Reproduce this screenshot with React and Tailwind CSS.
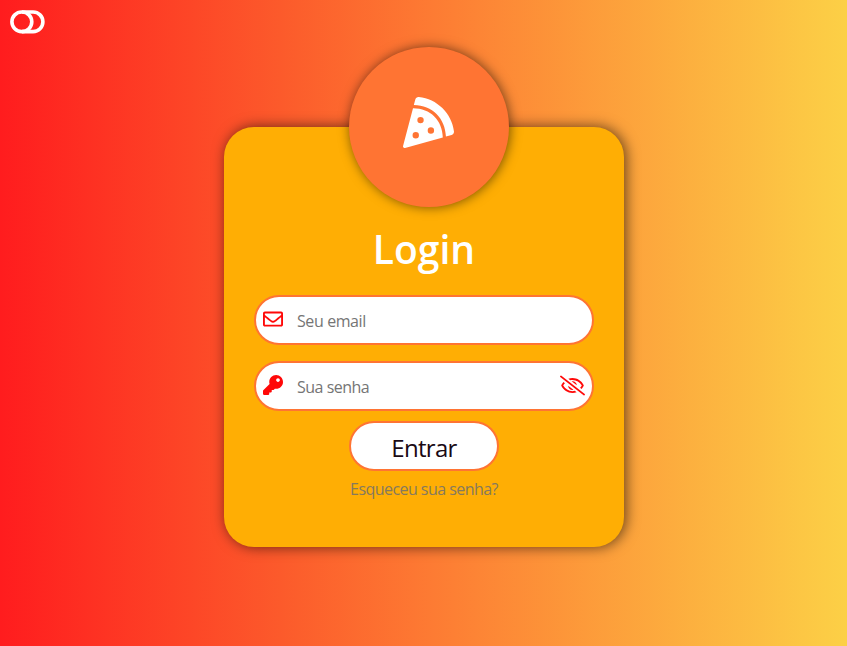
import { FaPizzaSlice, FaRegEnvelope, FaKey, FaRegEyeSlash } from "react-icons/fa";

function ToggleIcon() {
  return (
    <svg width="35" height="24" viewBox="0 0 35 24" fill="none" stroke="currentColor" strokeWidth="3.6" className="text-white">
      <rect x="1.9" y="2" width="31" height="19.6" rx="9.8" />
      <path d="M12 2a9.8 9.8 0 0 1 0 19.6" />
    </svg>
  );
}

export default function App() {
  return (
    <div className="flex h-[646px] w-[847px] flex-col overflow-hidden bg-[linear-gradient(to_right,#ff1c1e_0%,#fc5a2b_33%,#fd7b33_51%,#fcd046_100%)] font-['Open_Sans','Noto_Sans',sans-serif]">
      <header className="h-[47px] pt-[10px] pl-[10px]">
        <ToggleIcon />
      </header>
      <main className="ml-[224px] flex w-[400px] flex-col pt-20">
        <section className="flex h-[420px] flex-col items-center rounded-[30px] bg-[#ffae04] shadow-[2px_0px_14px_rgba(0,0,0,0.6)]">
          <div className="-mt-20 ml-[10px] flex size-40 shrink-0 items-center justify-center rounded-full bg-[#ff7433] pr-px pb-[10px] shadow-[1px_0px_12px_rgba(0,0,0,0.55)]">
            <FaPizzaSlice size={51} className="text-white" />
          </div>
          <h1 className="mt-[18px] h-[70px] text-[39px] leading-[48px] font-semibold text-white">Login</h1>
          <label className="flex h-[50px] w-[340px] shrink-0 items-center rounded-full border-2 border-[#ff7433] bg-white pl-[7px] text-[#ff0808]">
            <FaRegEnvelope size={20} className="mb-[2px]" />
            <input type="email" placeholder="Seu email" className="ml-[14px] w-60 pt-[2px] text-base tracking-[-0.4px] outline-none placeholder:text-[#757575]" />
          </label>
          <label className="mt-4 flex h-[50px] w-[340px] shrink-0 items-center rounded-full border-2 border-[#ff7433] bg-white pl-[7px] text-[#ff0808]">
            <FaKey size={20} className="mb-[2px]" />
            <input type="password" placeholder="Sua senha" className="ml-[14px] w-60 pt-[2px] text-base tracking-[-0.5px] outline-none placeholder:text-[#757575]" />
            <FaRegEyeSlash size={25} className="mr-[7px] mb-[2px] ml-auto" />
          </label>
          <button className="mt-[10px] h-[50px] w-[150px] shrink-0 rounded-full border-2 border-[#ff7433] bg-white pt-1 text-2xl tracking-[-0.7px] text-[#1a0a14]">Entrar</button>
          <a className="mt-[6px] text-base leading-6 tracking-[-0.55px] text-[#85795f]">Esqueceu sua senha?</a>
        </section>
      </main>
    </div>
  );
}
